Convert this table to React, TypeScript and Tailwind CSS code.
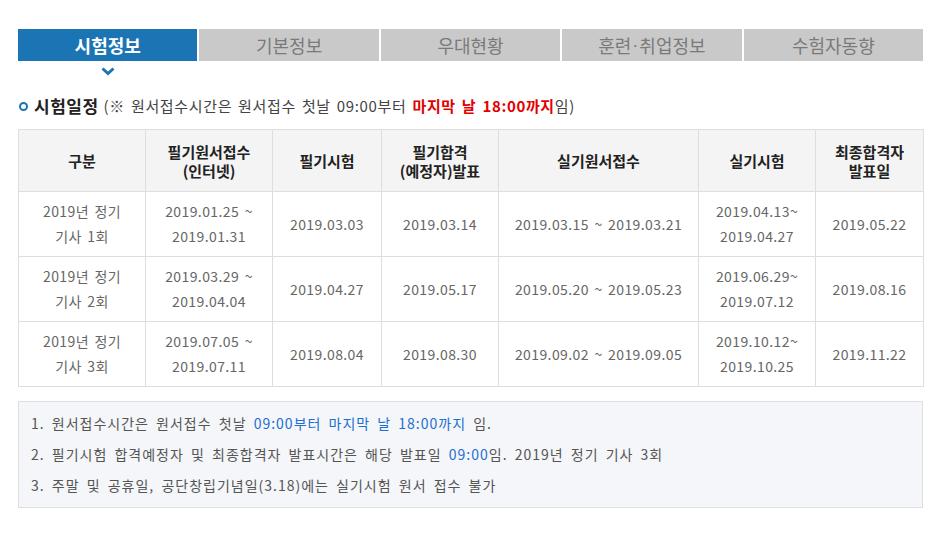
const font = { fontFamily: '"Noto Sans CJK KR", "Noto Sans", sans-serif' };

const tabs = ["시험정보", "기본정보", "우대현황", "훈련·취업정보", "수험자동향"];

const rows = [
  ["2019년 정기\n기사 1회", "2019.01.25 ~\n2019.01.31", "2019.03.03", "2019.03.14", "2019.03.15 ~ 2019.03.21", "2019.04.13~\n2019.04.27", "2019.05.22"],
  ["2019년 정기\n기사 2회", "2019.03.29 ~\n2019.04.04", "2019.04.27", "2019.05.17", "2019.05.20 ~ 2019.05.23", "2019.06.29~\n2019.07.12", "2019.08.16"],
  ["2019년 정기\n기사 3회", "2019.07.05 ~\n2019.07.11", "2019.08.04", "2019.08.30", "2019.09.02 ~ 2019.09.05", "2019.10.12~\n2019.10.25", "2019.11.22"],
];

const heads = ["구분", "필기원서접수\n(인터넷)", "필기시험", "필기합격\n(예정자)발표", "실기원서접수", "실기시험", "최종합격자\n발표일"];
const widths = ["w-[127px]", "w-[127px]", "w-[109px]", "w-[117px]", "w-[200px]", "w-[117px]", "w-[108px]"];

function Lines({ text }: { text: string }) {
  const parts = text.split("\n");
  return (
    <>
      {parts.map((p, i) => (
        <span key={i} className="block whitespace-pre">
          {p}
        </span>
      ))}
    </>
  );
}

function TabLabel({ t }: { t: string }) {
  if (!t.includes("·")) return <>{t}</>;
  const [a, b] = t.split("·");
  return (
    <>
      {a}
      <span className="font-['Liberation_Sans'] mx-[1px]">·</span>
      {b}
    </>
  );
}

export default function App() {
  return (
    <div className="w-[941px] h-[545px] bg-white" style={font}>
      <div className="pt-[29px] pl-[18px] w-[923px]">
        <div className="flex gap-[2px]">
          {tabs.map((t, i) => (
            <div
              key={t}
              className={
                i === 0
                  ? "flex-1 h-[32px] flex items-center justify-center bg-[#1b75b5] text-white font-bold text-[18px]"
                  : "flex-1 h-[32px] flex items-center justify-center bg-[#c9c9c9] text-[#7a7a7a] text-[18px]"
              }
            >
              <TabLabel t={t} />
            </div>
          ))}
        </div>
        <div className="w-[180px] flex justify-center mt-[6px] h-[12px]">
          <svg width="14" height="9" viewBox="0 0 14 9">
            <path d="M1.5 1.5 L7 6.5 L12.5 1.5" fill="none" stroke="#1b75b5" strokeWidth="3" />
          </svg>
        </div>
        <div className="flex items-center mt-[15px] h-[24px]">
          <span className="w-[9px] h-[9px] rounded-full border-[2.5px] border-[#1b75b5] mr-[6px] ml-[1px]" />
          <span className="font-bold text-[17px] tracking-[0.5px] text-[#222] mr-[5px]">시험일정</span>
          <span className="text-[15px] text-[#444] tracking-[0.65px] [word-spacing:2px]">
            (※ 원서접수시간은 원서접수 첫날 09:00부터{" "}
            <span className="text-[#e30000] font-bold">마지막 날 18:00까지</span>임)
          </span>
        </div>
        <table className="mt-[11px] border-collapse w-[905px] table-fixed">
          <thead>
            <tr className="h-[62px] bg-[#f4f4f4]">
              {heads.map((h, i) => (
                <th
                  key={i}
                  className={`${widths[i]} border border-[#dedede] text-[15px] leading-[19px] font-bold text-[#222] text-center`}
                >
                  <Lines text={h} />
                </th>
              ))}
            </tr>
          </thead>
          <tbody>
            {rows.map((r, ri) => (
              <tr key={ri} className="h-[65px]">
                {r.map((c, ci) => (
                  <td
                    key={ci}
                    className="border border-[#dedede] text-center text-[14px] leading-[25px] text-[#666] tracking-[0.4px] [word-spacing:2px]"
                  >
                    <Lines text={c} />
                  </td>
                ))}
              </tr>
            ))}
          </tbody>
        </table>
        <div className="mt-[14px] h-[107px] border border-[#dedede] bg-[#f4f6f9] pl-[12px] pt-[6px] text-[14px] leading-[31px] text-[#555] tracking-[1px] [word-spacing:3px]">
          <p>
            1. 원서접수시간은 원서접수 첫날 <span className="text-[#1c6fd4]">09:00부터 마지막 날 18:00까지</span> 임.
          </p>
          <p>
            2. 필기시험 합격예정자 및 최종합격자 발표시간은 해당 발표일{" "}
            <span className="text-[#1c6fd4]">09:00</span>임. 2019년 정기 기사 3회
          </p>
          <p>3. 주말 및 공휴일, 공단창립기념일(3.18)에는 실기시험 원서 접수 불가</p>
        </div>
      </div>
    </div>
  );
}
